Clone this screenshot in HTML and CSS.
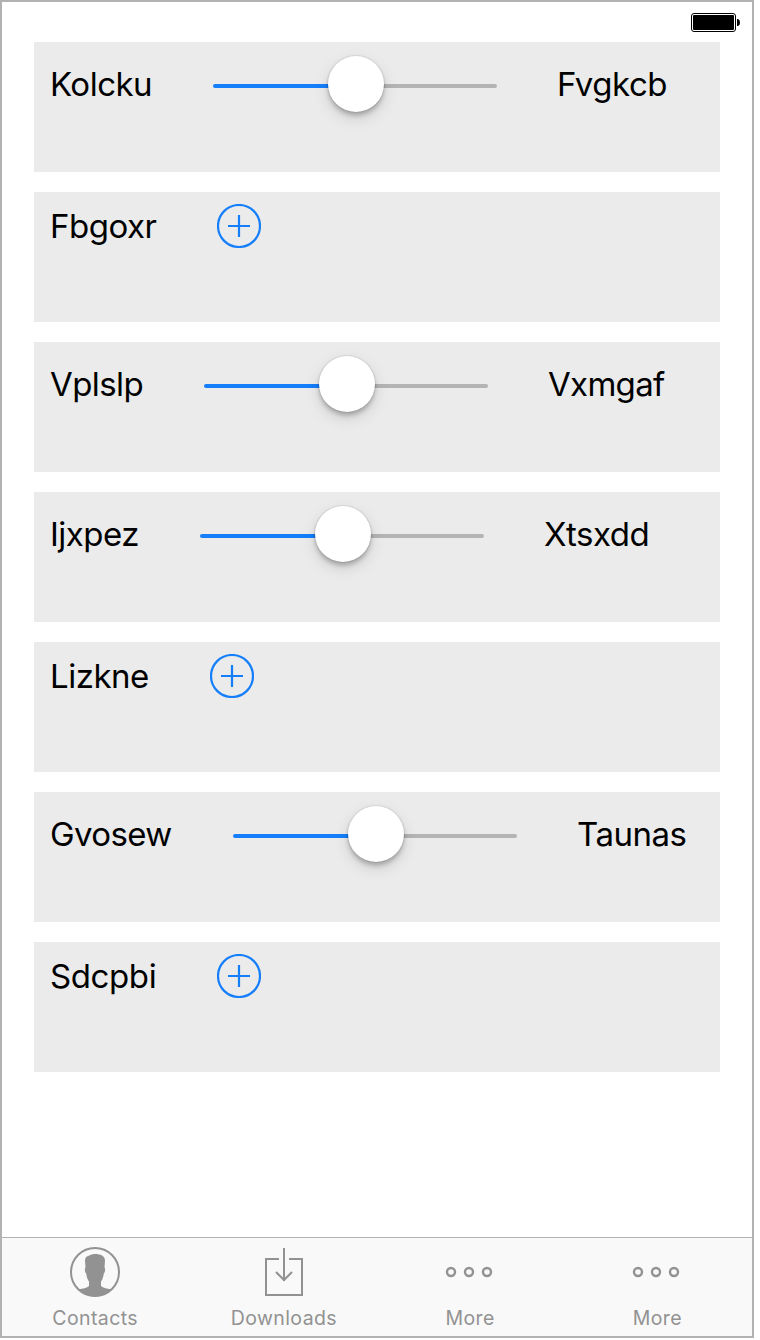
FILE: index.html
```html
<!DOCTYPE html>
<html lang="en">
<head>
<meta charset="utf-8">
<title>Controls</title>
<link rel="stylesheet" href="styles.css">
</head>
<body>
<div class="screen">
  <header class="status">
    <svg width="50" height="20" viewBox="0 0 50 20"><rect x=".5" y=".5" width="44" height="18" rx="2.5" fill="#fff" stroke="#000"/><rect x="2" y="2" width="41" height="15" rx="1" fill="#000"/><path d="M46 6h1q2 .5 2 3.500t-2 3.500h-1z" fill="#000"/></svg>
  </header>
  <main class="list">
    <section class="row"><span class="label kolcku">Kolcku</span><div class="slider"><div class="knob"></div></div><span class="label fvgkcb">Fvgkcb</span></section>
    <section class="row short"><span class="label fbgoxr">Fbgoxr</span><svg class="add" viewBox="0 0 44 44"><circle cx="22" cy="22" r="21"/><path d="M11 22h22M22 11v22"/></svg></section>
    <section class="row"><span class="label vplslp">Vplslp</span><div class="slider"><div class="knob"></div></div><span class="label vxmgaf">Vxmgaf</span></section>
    <section class="row"><span class="label ijxpez">Ijxpez</span><div class="slider"><div class="knob"></div></div><span class="label xtsxdd">Xtsxdd</span></section>
    <section class="row short"><span class="label lizkne">Lizkne</span><svg class="add" viewBox="0 0 44 44"><circle cx="22" cy="22" r="21"/><path d="M11 22h22M22 11v22"/></svg></section>
    <section class="row"><span class="label gvosew">Gvosew</span><div class="slider"><div class="knob"></div></div><span class="label taunas">Taunas</span></section>
    <section class="row short"><span class="label sdcpbi">Sdcpbi</span><svg class="add" viewBox="0 0 44 44"><circle cx="22" cy="22" r="21"/><path d="M11 22h22M22 11v22"/></svg></section>
  </main>
  <nav class="tabs">
    <div class="tab contacts"><svg width="50" height="50" viewBox="0 0 50 50"><circle cx="25" cy="25" r="24" fill="none" stroke="#929292" stroke-width="2"/><path d="M25 7C30.500 7 35 9 35 13.500L34.500 20.500C35.600 21 35.200 25.500 33.800 26.500C33.300 30 32.500 32.500 31 34.500V39C33 41.200 37 41.500 41.500 42.500C37 47.500 31 49.500 25 49.500S13 47.500 8.500 42.500C13 41.500 17 41.200 19 39V34.500C17.500 32.500 16.700 30 16.200 26.500C14.800 25.500 14.400 21 15.500 20.500L15 13.500C15 10.500 17 9 19.500 8.500C21 7.500 23 7 25 7Z" fill="#929292"/></svg><span>Contacts</span></div>
    <div class="tab downloads"><svg width="50" height="50" viewBox="0 0 50 50"><path d="M20 12H7v36h36V12H30M25 1v33M17 25l8 8 8-8" fill="none" stroke="#929292" stroke-width="2"/></svg><span>Downloads</span></div>
    <div class="tab"><svg width="50" height="50" viewBox="0 0 50 50" fill="none" stroke="#929292" stroke-width="2.400"><circle cx="6" cy="25" r="4"/><circle cx="24" cy="25" r="4"/><circle cx="42" cy="25" r="4"/></svg><span>More</span></div>
    <div class="tab"><svg width="50" height="50" viewBox="0 0 50 50" fill="none" stroke="#929292" stroke-width="2.400"><circle cx="6" cy="25" r="4"/><circle cx="24" cy="25" r="4"/><circle cx="42" cy="25" r="4"/></svg><span>More</span></div>
  </nav>
</div>
</body>
</html>
```
FILE: styles.css
```css
body { margin: 0; background: #fff; font-family: Inter, "Liberation Sans", sans-serif; }
.screen { box-sizing: border-box; width: 754px; height: 1338px; border: 2px solid #b2b2b2; display: flex; flex-direction: column; background: #fff; }
.status { height: 40px; box-sizing: border-box; padding: 11px 11px 0 0; display: flex; justify-content: flex-end; }
.list { flex: 1; display: flex; flex-direction: column; gap: 20px; padding: 0 32px; }
.row { box-sizing: border-box; height: 130px; background: #ebebeb; padding: 14px 16px 0; display: flex; align-items: flex-start; gap: 60px; }
.short { padding-top: 12px; }
.label { flex: none; font-size: 33px; line-height: 56px; letter-spacing: -.5px; color: #000; white-space: nowrap; }
.short .label { line-height: 44px; }
.kolcku { width: 103px; }
.fbgoxr { width: 107px; }
.vplslp { width: 94px; letter-spacing: -.6px; }
.vxmgaf { letter-spacing: -.7px; }
.ijxpez { width: 90px; }
.lizkne { width: 100px; }
.gvosew { width: 123px; letter-spacing: -.6px; }
.sdcpbi { width: 107px; letter-spacing: -.4px; }
.slider { flex: none; width: 284px; height: 4px; margin-top: 28px; border-radius: 2px; background: linear-gradient(90deg, #147efb 50%, #b4b4b4 50%); display: flex; justify-content: center; align-items: center; }
.knob { flex: none; width: 56px; height: 56px; margin: -4px 0 0 2px; border-radius: 50%; background: #fff; box-shadow: 0 0 1px 1px rgba(0,0,0,.08), 0 4px 4px rgba(0,0,0,.2), 0 6px 16px rgba(0,0,0,.13); }
.add { flex: none; width: 44px; height: 44px; fill: none; stroke: #147efb; stroke-width: 2.2; }
.tabs { height: 99px; box-sizing: border-box; border-top: 1px solid #b2b2b2; background: #f9f9f9; display: grid; grid-template-columns: repeat(4, 1fr); padding: 9px 1px 0 0; }
.tab { display: flex; flex-direction: column; align-items: center; color: #929292; font-size: 19.500px; line-height: 24px; letter-spacing: .4px; gap: 9px; }
.contacts { padding-right: 1px; }
.downloads { padding-left: 2px; }
```
